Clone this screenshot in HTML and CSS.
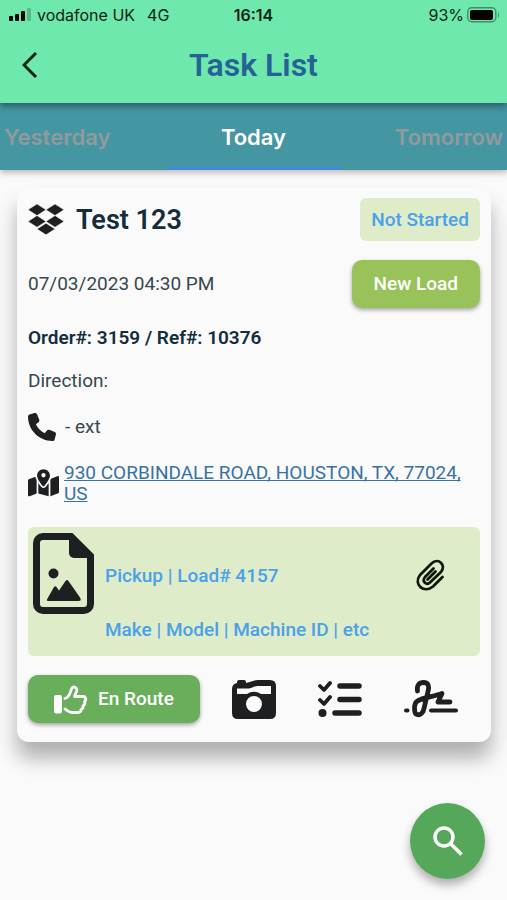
FILE: index.html
```html
<!DOCTYPE html>
<html lang="en">
<head>
<meta charset="utf-8">
<meta name="viewport" content="width=device-width, initial-scale=1">
<title>Task List</title>
<link rel="stylesheet" href="styles.css">
</head>
<body>
<header class="top">
  <div class="status">
    <div class="carrier">
      <svg width="23" height="13" viewBox="0 0 23 13" aria-hidden="true"><rect x="0" y="8" width="4" height="5" rx="1"/><rect x="6" y="6" width="4" height="7" rx="1"/><rect x="12" y="3" width="4" height="10" rx="1"/><rect x="18" y="0" width="4" height="13" rx="1" opacity=".2"/></svg>
      <span>vodafone UK</span><span class="network">4G</span>
    </div>
    <div class="clock">16:14</div>
    <div class="battery">
      <span>93%</span>
      <svg width="33" height="16" viewBox="0 0 33 16" aria-hidden="true"><rect x=".8" y=".8" width="28" height="14" rx="4" fill="none" stroke="#000" stroke-opacity=".4" stroke-width="1.4"/><rect x="3" y="3" width="23" height="10" rx="2"/><path d="M31 5q2 3 0 6z" opacity=".45"/></svg>
    </div>
  </div>
  <div class="bar">
    <button class="back" type="button" aria-label="Back"><svg width="16" height="26" viewBox="0 0 16 26" fill="none" stroke="#0c2614" stroke-width="3" aria-hidden="true"><path d="M14 1 2 13l12 12"/></svg></button>
    <h1>Task List</h1>
  </div>
</header>
<nav class="tabs">
  <a href="#yesterday">Yesterday</a>
  <a href="#today" class="active" aria-current="page">Today</a>
  <a href="#tomorrow" class="next">Tomorrow</a>
</nav>
<main>
  <article class="card">
    <div class="row heading">
      <svg width="36" height="32" viewBox="0 0 36 32" aria-hidden="true"><path d="M9 0l9 5.800-9 5.800-9-5.800zM27 0l9 5.800-9 5.800-9-5.800zM9 11.600l9 5.800-9 5.800-9-5.800zM27 11.600l9 5.800-9 5.800-9-5.800zM18 19.200l9 5.800-9 5.800-9-5.800z" fill="#1d1f20" stroke="#fafafa" stroke-width=".5"/></svg>
      <h2>Test 123</h2>
      <span class="badge">Not Started</span>
    </div>
    <div class="row schedule">
      <time datetime="2023-07-03T16:30">07/03/2023 04:30 PM</time>
      <button class="btn new" type="button">New Load</button>
    </div>
    <p class="order">Order#: 3159 / Ref#: 10376</p>
    <p class="direction">Direction:</p>
    <div class="contact">
      <svg width="28" height="28" viewBox="0 0 512 512" fill="#1d1f20" aria-hidden="true"><path d="M164.900 24.600c-7.700-18.600-28-28.500-47.400-23.200l-88 24C12.100 30.200 0 46 0 64c0 247.400 200.600 448 448 448 18 0 33.800-12.100 38.600-29.500l24-88c5.300-19.400-4.600-39.700-23.200-47.400l-96-40c-16.300-6.800-35.200-2.100-46.300 11.600L304.700 368C234.300 334.700 177.300 277.700 144 207.300L193.300 167c13.700-11.200 18.400-30 11.600-46.300l-40-96z"/></svg>
      <span>- ext</span>
    </div>
    <div class="contact address">
      <svg width="31" height="28" viewBox="0 0 576 512" fill="#1d1f20" aria-hidden="true"><path d="M408 120c0 54.600-73.100 151.900-105.200 192-7.700 9.600-22 9.600-29.600 0C241.100 271.900 168 174.600 168 120 168 53.700 221.700 0 288 0s120 53.700 120 120zm8 80.400c3.500-6.900 6.700-13.800 9.600-20.600.5-1.200 1-2.500 1.500-3.700l116-46.400C558.900 123.400 576 135 576 152v270.800c0 9.800-6 18.600-15.100 22.300L416 503zM137.600 138.300c2.400 14.100 7.200 28.300 12.800 41.500 2.900 6.800 6.100 13.700 9.600 20.600v251.400L32.900 502.700C17.100 509 0 497.400 0 480.400V209.600c0-9.800 6-18.600 15.100-22.300l122.600-49zM327.800 332c13.900-17.400 35.700-45.700 56.200-77v249.300l-192-54.900V255c20.500 31.300 42.300 59.600 56.200 77 20.500 25.600 59.100 25.600 79.600 0zM288 152a40 40 0 1 0 0-80 40 40 0 1 0 0 80z"/></svg>
      <a href="#map">930 CORBINDALE ROAD, HOUSTON, TX, 77024, US</a>
    </div>
    <section class="load">
      <svg class="file" width="61" height="81" viewBox="0 0 61 81" aria-hidden="true"><path d="M10 3.500h28L57.500 23v48a6.500 6.500 0 0 1-6.500 6.500H10A6.500 6.500 0 0 1 3.500 71V10A6.500 6.500 0 0 1 10 3.500z" fill="none" stroke="#1d1f20" stroke-width="7"/><path d="M36 3h4l18 18v4H41a5 5 0 0 1-5-5z"/><circle cx="20.500" cy="40.500" r="5"/><path d="M14.500 65.500 21 54q1-1.500 2.500 0l2.500 3.500 6.500-9.500q1.500-2 3 0L47 64.500q2 3.500-1.500 3.500H15q-2 0-.5-2.500z"/></svg>
      <div class="details"><p>Pickup | Load# 4157</p><p>Make | Model | Machine ID | etc</p></div>
      <button class="tool clip" type="button" aria-label="Attachments"><svg width="29" height="32" viewBox="0 0 29 32" fill="none" stroke="#10180c" stroke-width="2.800" stroke-linecap="round" stroke-linejoin="round" aria-hidden="true"><path d="M26.500 18 17 27.500C8 35-3 25.500 4 16L15.500 4.500c7-6.500 15 1.500 9.500 8.500L14.500 23c-4 4-9-.5-5.500-5l8.500-8.500M11.500 20.500l8-8"/></svg></button>
    </section>
    <div class="actions">
      <button class="btn route" type="button"><svg width="33" height="29" viewBox="0 0 33 29" aria-hidden="true"><rect x="0" y="10" width="8" height="18.500" rx="2" fill="#fff"/><path d="M11 13.500c5-2 5-5.500 6.500-9.500 1.500-3.500 6.500-2 5 2.500L20.500 11.500H29c3 0 3.500 3.500 1.500 5 1 2 0 3.500-1.500 4.500.5 2-.5 3-2 3.500.5 2-1.500 3-3 3h-6c-3 0-4.500-2-7-3.500" fill="none" stroke="#fff" stroke-width="2.800" stroke-linecap="round" stroke-linejoin="round"/></svg>En Route</button>
      <div class="tools">
        <button class="tool" type="button" aria-label="Camera"><svg width="44" height="39" viewBox="0 0 44 39" aria-hidden="true"><path fill="#1d1f20" fill-rule="evenodd" d="M5 3V2q0-2 2-2h5q2 0 2 2v1c5-1 8-3 12-3h12q6 0 6 6v27q0 6-6 6H6q-6 0-6-6V9Q0 4 5 3zM5 8.500v5.500h10c5-3 9-3 14 0h10V6H26c-4 0-6 2.500-10 2.500zM22 16a8 8 0 1 0 0 16 8 8 0 1 0 0-16z"/></svg></button>
        <button class="tool" type="button" aria-label="Checklist"><svg width="44" height="38" viewBox="0 0 44 38" fill="none" stroke="#1d1f20" stroke-width="3.800" stroke-linecap="round" stroke-linejoin="round" aria-hidden="true"><path d="m2 6 4 4 6-7M2 20l4 4 6-7"/><path stroke-width="5.500" d="M22 6h19M22 19.500h19M17 33h24"/><circle cx="4.500" cy="33" r="4" fill="#1d1f20" stroke="none"/></svg></button>
        <button class="tool" type="button" aria-label="Signature"><svg width="54" height="38" viewBox="0 0 54 38" fill="none" stroke="#1d1f20" stroke-width="4.800" stroke-linecap="round" stroke-linejoin="round" aria-hidden="true"><path d="M13.500 11c-1-6 2-8.500 6-8.500 5 0 6 4 4.500 9l-4 17c-1 5-4 7-7 6-3-1-3-8-1.500-11.500C14 18 29 17 38 13.500l-4 8.500h12"/><path stroke-width="4" d="M2 30.500h1.500M27 30.500h25"/></svg></button>
      </div>
    </div>
  </article>
</main>
<button class="search" type="button" aria-label="Search"><svg width="30" height="30" viewBox="0 0 30 30" fill="none" stroke="#fff" stroke-width="3.500" aria-hidden="true"><circle cx="11" cy="11" r="9"/><path d="m17.500 17.500 11 11"/></svg></button>
</body>
</html>
```
FILE: styles.css
```css
* { box-sizing: border-box; }
body {
  margin: 0;
  min-height: 100vh;
  background: #fafafa;
  color: #354850;
  font: 19px/22px Roboto, sans-serif;
}
h1, h2, p { margin: 0; }
button { border: 0; font: inherit; cursor: pointer; }
svg { display: block; flex: none; }

.top {
  position: relative;
  z-index: 2;
  background: #6fe8ae;
  box-shadow: 0 3px 7px rgba(0, 0, 0, .4);
}
.status {
  display: grid;
  grid-template-columns: 1fr auto 1fr;
  align-items: center;
  height: 29px;
  padding: 0 9px;
  color: #0c2614;
  font: 16px/20px Inter, sans-serif;
}
.carrier, .battery { display: flex; align-items: center; gap: 5px; }
.network { margin-left: 7px; }
.battery { justify-content: flex-end; gap: 3px; margin-right: -2px; }
.clock { font-weight: 600; }
.bar {
  display: grid;
  grid-template-columns: 60px 1fr 60px;
  align-items: center;
  height: 74px;
  padding-bottom: 2px;
}
.back { display: grid; place-items: center; height: 48px; padding: 0; background: none; }
h1 { color: #266296; font: 600 32px/40px Roboto, sans-serif; text-align: center; }

.tabs {
  position: relative;
  display: grid;
  grid-template-columns: 1fr 174px 1fr;
  height: 67px;
  background: #4496a3;
  box-shadow: 0 3px 6px rgba(0, 0, 0, .25);
}
.tabs a {
  display: grid;
  align-items: center;
  padding: 0 4px;
  color: #929a9b;
  font: 600 22px/28px Inter, sans-serif;
  text-decoration: none;
}
.tabs .next { justify-content: end; }
.tabs .active { justify-content: center; border-bottom: 3px solid #4388dc; padding-top: 3px; color: #fff; }

main { padding: 18px 16px 0 17px; }
.card {
  padding: 10px 11px 19px;
  border-radius: 12px;
  background: #fafafa;
  box-shadow: 0 16px 20px rgba(0, 0, 0, .3);
}
.row { display: flex; align-items: center; }
.heading { gap: 12px; height: 43px; }
h2 { color: #142d3b; font: 600 27px/32px Roboto, sans-serif; }
.badge {
  margin-left: auto;
  padding: 11px 11px 10px;
  border-radius: 6px;
  background: #dfecca;
  color: #4aa1e7;
  font-weight: 500;
}
.schedule { justify-content: space-between; margin-top: 19px; }
.btn {
  height: 48px;
  padding: 0 22px;
  border-radius: 10px;
  color: #fff;
  font-weight: 500;
  box-shadow: 0 2px 4px rgba(0, 0, 0, .35);
}
.new { background: #98c35a; }
.order { margin-top: 19px; color: #142d3b; font-weight: 600; }
.direction { margin-top: 21px; }
.contact { display: flex; align-items: center; gap: 9px; margin-top: 21px; }
.address { gap: 5px; line-height: 21px; }
.address a { color: #3972a4; text-decoration-thickness: 1px; text-underline-offset: 1px; text-decoration-skip-ink: none; }

.load {
  display: flex;
  align-items: flex-start;
  min-height: 129px;
  margin-top: 23px;
  padding: 6px 30px 6px 5px;
  border-radius: 6px;
  background: #dfecca;
}
.file { fill: #1d1f20; }
.details { display: grid; gap: 32px; margin: 32px 0 0 11px; color: #4aa1e7; font-weight: 500; }
.clip { margin: 26px 5px 0 auto; }
.tool { padding: 0; background: none; }

.actions { display: flex; align-items: center; justify-content: space-between; margin-top: 19px; padding-right: 22px; }
.tools { display: flex; align-items: center; gap: 42px; }
.route { display: flex; align-items: center; gap: 11px; padding: 0 26px; background: #68ae5b; }

.search {
  position: fixed;
  right: 22px;
  bottom: 21px;
  display: grid;
  place-items: center;
  width: 75px;
  height: 76px;
  border-radius: 50%;
  background: #55a75a;
  box-shadow: 0 6px 10px rgba(0, 0, 0, .3);
}
```
